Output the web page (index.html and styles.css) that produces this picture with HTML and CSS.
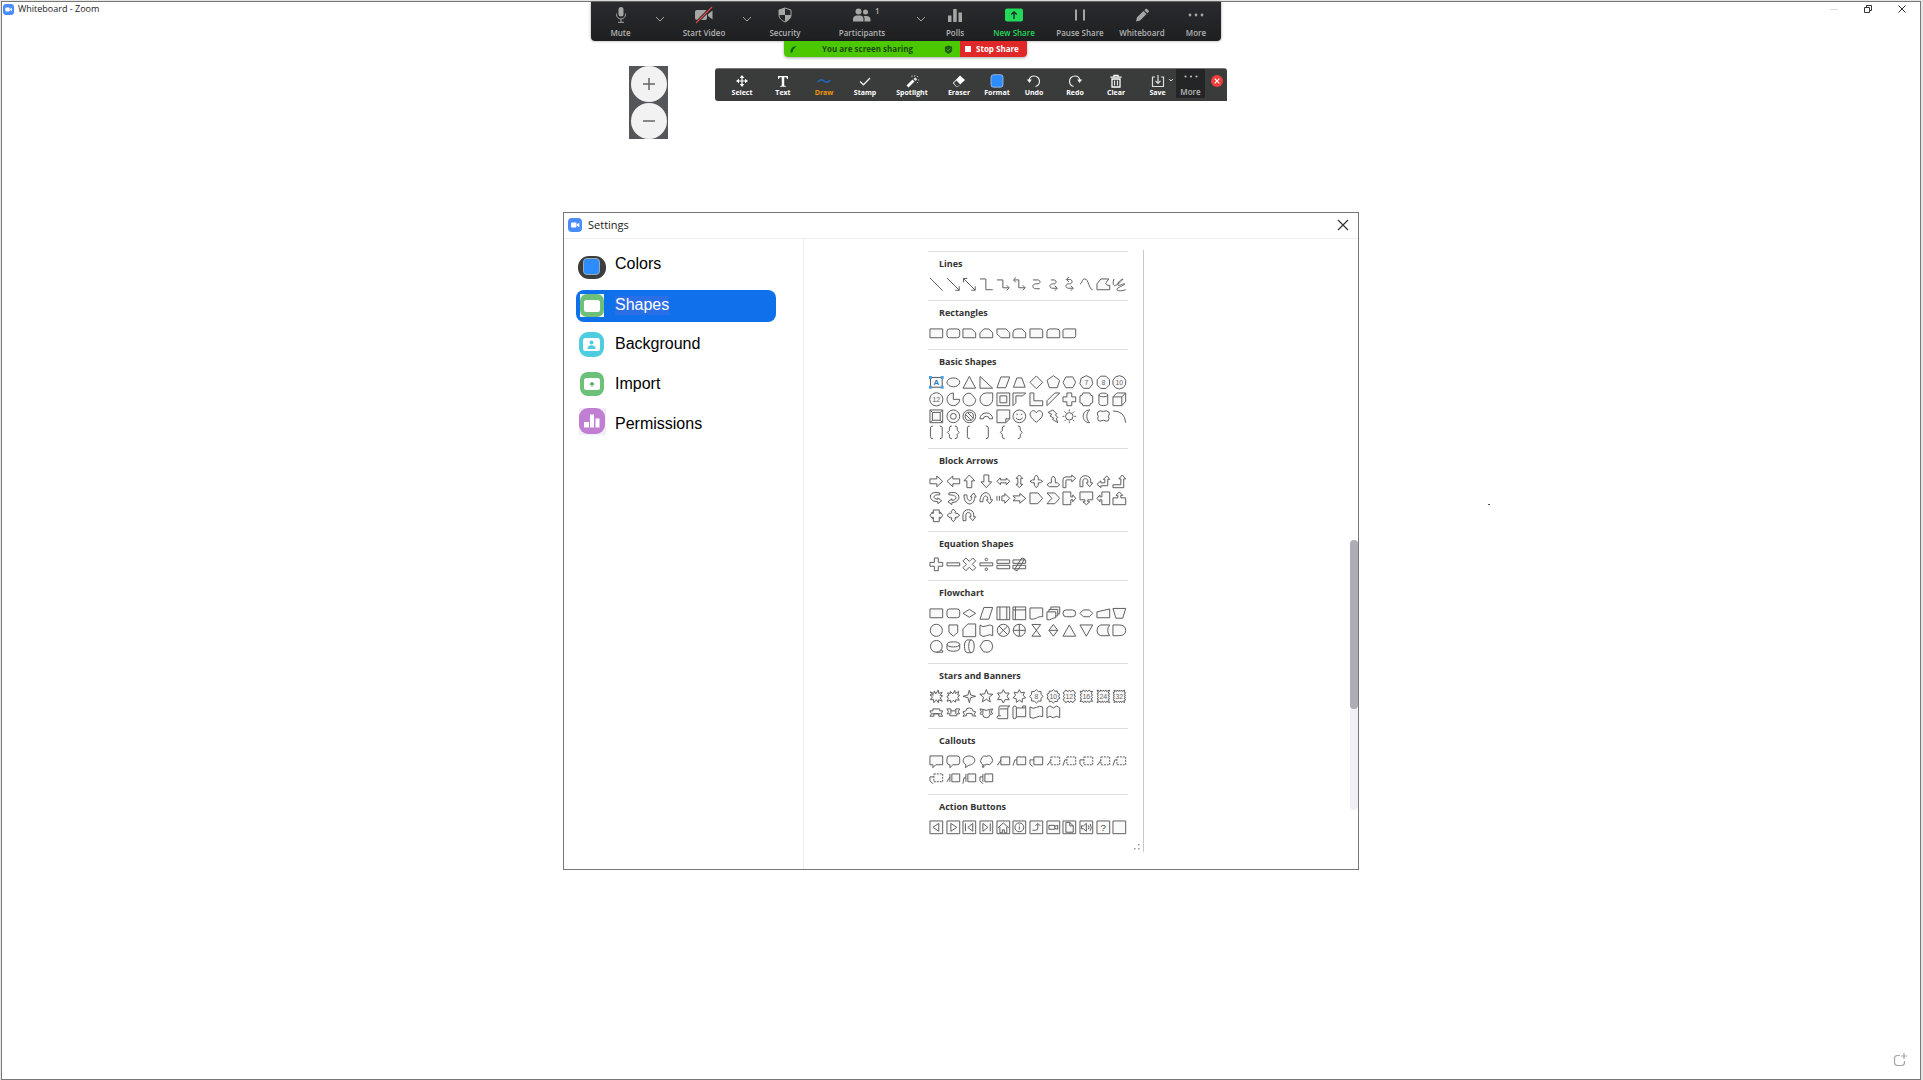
FILE: index.html
```html
<!DOCTYPE html>
<html lang="en">
<head>
<meta charset="utf-8">
<title>Whiteboard - Zoom</title>
<link rel="stylesheet" href="styles.css">
</head>
<body>
<main class="window">
  <header class="titlebar">
    <svg class="app-icon" viewBox="0 0 14 14"><rect width="14" height="14" rx="4" fill="#4a8cff"/><rect x="3" y="4.500" width="5.500" height="5" rx="1" fill="#fff"/><path d="M9 6.300l2.300-1.500v4.400L9 7.700z" fill="#fff"/></svg>
    <h1 class="window-title">Whiteboard - Zoom</h1>
    <div class="window-controls">
      <button aria-label="Minimize"><svg viewBox="0 0 10 10"><path d="M1 5.500h8" stroke="#ddd"/></svg></button>
      <button aria-label="Restore"><svg viewBox="0 0 10 10"><path d="M1.500 3.500h5v5h-5zM3.500 3V1.500h5v5H7" stroke="#333"/></svg></button>
      <button aria-label="Close"><svg viewBox="0 0 10 10"><path d="M1.500 1.500l7 7M8.500 1.500l-7 7" stroke="#333"/></svg></button>
    </div>
  </header>

  <nav class="meeting-bar" aria-label="Meeting controls">
    <button class="tool"><svg viewBox="0 0 20 18"><rect x="7.500" y="1" width="5" height="9.500" rx="2.500" fill="#a6a6a6"/><path d="M5.500 7.500v1a4.500 4.500 0 0 0 9 0v-1M10 13v3M7 16.300h6" stroke="#a6a6a6" fill="none"/></svg>Mute</button>
    <button class="caret" aria-label="Audio options"><svg viewBox="0 0 10 6"><path d="M1 1l4 4 4-4"/></svg></button>
    <button class="tool"><svg viewBox="0 0 20 18"><rect x="1" y="4" width="12" height="10" rx="2" fill="#a6a6a6"/><path d="M14 8l4.500-3.500v9L14 10z" fill="#a6a6a6"/><path d="M2 17L18 1" stroke="#222325" stroke-width="3"/><path d="M2 17L18 1" stroke="#e0484c" stroke-width="1.200"/></svg>Start Video</button>
    <button class="caret" aria-label="Video options"><svg viewBox="0 0 10 6"><path d="M1 1l4 4 4-4"/></svg></button>
    <button class="tool"><svg viewBox="0 0 20 18"><path d="M10 2l6 2v5c0 3-2.500 5.500-6 7-3.500-1.500-6-4-6-7V4z" stroke="#a6a6a6" fill="none"/><path d="M10 2v7H4V4zM10 9h6c0 3-2.500 5.500-6 7z" fill="#a6a6a6"/></svg>Security</button>
    <button class="tool"><svg viewBox="0 0 20 18"><circle cx="6.500" cy="5.500" r="3" fill="#a6a6a6"/><circle cx="13.500" cy="6" r="2.500" fill="#a6a6a6"/><path d="M1 15.500V13c0-2 2-3.500 4-3.500h3c2 0 3.500 1.500 3.500 3.500v2.500zM12.500 15.500v-3c0-1-.5-2-1-2.500h3c2.500 0 4 1.500 4 3.500v2z" fill="#a6a6a6"/></svg>Participants<span class="count">1</span></button>
    <button class="caret" aria-label="Participant options"><svg viewBox="0 0 10 6"><path d="M1 1l4 4 4-4"/></svg></button>
    <button class="tool"><svg viewBox="0 0 20 18"><path d="M3 9.500h3.500V16H3zM8.200 3h3.500v13H8.200zM13.500 6.500H17V16h-3.500z" fill="#a6a6a6"/></svg>Polls</button>
    <button class="tool new-share"><svg viewBox="0 0 20 18"><rect x="1" y="2.500" width="18" height="13" rx="2" fill="#23d959"/><path d="M10 13V6M7.300 8.500L10 5.800l2.700 2.700" stroke="#222325" stroke-width="1.300" fill="none"/></svg>New Share</button>
    <button class="tool"><svg viewBox="0 0 20 18"><path d="M6 3.500v11M14 3.500v11" stroke="#a6a6a6" stroke-width="2"/></svg>Pause Share</button>
    <button class="tool"><svg viewBox="0 0 20 18"><path d="M4 15.500l1-4.200L11.500 5l3 3-6.400 6.400zM12.300 4.200l1.300-1.300q.7-.6 1.400 0l1.600 1.600q.7.700 0 1.400L15.300 7.200z" fill="#a6a6a6"/></svg>Whiteboard</button>
    <button class="tool"><svg viewBox="0 0 20 18"><circle cx="4" cy="9" r="1.400" fill="#a6a6a6"/><circle cx="10" cy="9" r="1.400" fill="#a6a6a6"/><circle cx="16" cy="9" r="1.400" fill="#a6a6a6"/></svg>More</button>
  </nav>

  <div class="share-bar">
    <div class="share-status">
      <svg viewBox="0 0 10 10"><path d="M2 9C1 5 4 1 8.500 1.500 6 3 6.500 4 4.500 5 5 7 3.500 8 2 9z" fill="#0a5a14"/></svg>
      <span>You are screen sharing</span>
      <svg viewBox="0 0 10 10"><path d="M5 .5l4 1.500v3.500C9 7.500 7 9 5 9.800 3 9 1 7.500 1 5.500V2z" fill="#1d5c12"/><path d="M3 5l1.500 1.500L7.200 3.800" stroke="#4cc800" fill="none"/></svg>
    </div>
    <button class="stop-share">Stop Share</button>
  </div>

  <div class="zoom-control">
    <button aria-label="Zoom in"><svg viewBox="0 0 14 14"><path d="M7 1v12M1 7h12" stroke="#666" stroke-width="1.500"/></svg></button>
    <button aria-label="Zoom out"><svg viewBox="0 0 14 14"><path d="M1 7h12" stroke="#888" stroke-width="2"/></svg></button>
  </div>

  <nav class="draw-bar" aria-label="Annotation tools">
    <button class="tool"><svg viewBox="0 0 16 14"><path d="M8 1l2.300 3H5.700zM8 13l2.300-3H5.700zM2 7l3-2.300v4.600zM14 7l-3-2.300v4.600z" fill="#fff"/><path d="M8 3v8M4 7h8" stroke="#fff" stroke-width="1.200"/></svg>Select</button>
    <button class="tool"><svg viewBox="0 0 16 14"><path d="M3 2h10v3h-1l-.7-1.700H9.200V11.500l1.600.5v.8H5.200V12l1.600-.5V3.300H4.700L4 5H3z" fill="#fff"/></svg>Text</button>
    <button class="tool active"><svg viewBox="0 0 16 14"><path d="M2 8c2-3 4-2.500 6-1s4 2 6-1" stroke="#1d6cc8" stroke-width="1.500" fill="none"/></svg>Draw</button>
    <button class="tool"><svg viewBox="0 0 16 14"><path d="M3 7.500l3.500 3.300L13 4" stroke="#eee" stroke-width="1.300" fill="none"/></svg>Stamp</button>
    <button class="tool"><svg viewBox="0 0 16 14"><path d="M2.500 11.500l6-6 2 2-6 6z" fill="#fff"/><path d="M9.500 5l1.700-1.700 2 2L11.500 7z" fill="#ddd"/><path d="M8 3V1.500M10.500 2.500l.5-1.500M13 3l1-1M14 6h1.200M13 8l1 1" stroke="#ddd" stroke-width=".8"/></svg>Spotlight</button>
    <button class="tool"><svg viewBox="0 0 16 14"><path d="M9 1.500l5 4.500-7 6.500H5L1.800 9z" fill="#fff"/><path d="M5.300 6.500l4 4-2.300 1.500H5.300L2.800 9z" fill="#3a3b3b"/></svg>Eraser</button>
    <button class="tool"><svg viewBox="0 0 16 14"><rect x="2" y=".7" width="12" height="12.500" rx="2.500" fill="#2d8cff" stroke="#a9c4e6" stroke-width=".8"/></svg>Format</button>
    <button class="tool"><svg viewBox="0 0 16 14"><path d="M3 6.500C3.500 3.500 5.500 2 8 2c3 0 5.500 2.300 5.500 5.300 0 2.500-1.500 4.500-4 5.200" stroke="#eee" stroke-width="1.200" fill="none"/><path d="M.8 5.500h5L3.500 9z" fill="#eee"/></svg>Undo</button>
    <button class="tool"><svg viewBox="0 0 16 14"><path d="M13 6.500C12.500 3.500 10.500 2 8 2 5 2 2.500 4.300 2.500 7.300c0 2.500 1.500 4.500 4 5.200" stroke="#eee" stroke-width="1.200" fill="none"/><path d="M15.200 5.500h-5L12.500 9z" fill="#eee"/></svg>Redo</button>
    <button class="tool"><svg viewBox="0 0 16 14"><path d="M2.500 3.200h11M6 3V1.300h4V3M4 5v8h8V5z" stroke="#fff" stroke-width="1.300" fill="none"/><path d="M6.600 6.500v5M9.400 6.500v5" stroke="#fff"/></svg>Clear</button>
    <button class="tool save"><svg viewBox="0 0 16 14"><path d="M5 3H2.500v9.500h11V3H11M8 1v8M5.500 6.800L8 9.300l2.500-2.500" stroke="#ddd" stroke-width="1.200" fill="none"/></svg>Save<svg class="save-caret" viewBox="0 0 6 4"><path d="M1 1l2 2 2-2" stroke="#ddd" fill="none"/></svg></button>
    <button class="tool more"><svg viewBox="0 0 16 14"><circle cx="2.500" cy="3.500" r="1.100" fill="#bbb"/><circle cx="8" cy="3.500" r="1.100" fill="#bbb"/><circle cx="13.500" cy="3.500" r="1.100" fill="#bbb"/></svg>More</button>
    <button class="close-tools" aria-label="Close annotation tools"><svg viewBox="0 0 12 12"><circle cx="6" cy="6" r="6" fill="#f23d3d"/><path d="M3.700 3.700l4.600 4.600M8.300 3.700L3.700 8.300" stroke="#fff" stroke-width="1.200"/></svg></button>
  </nav>

  <section class="settings" aria-labelledby="settings-title">
    <header class="settings-header">
      <svg class="app-icon large" viewBox="0 0 14 14"><rect width="14" height="14" rx="4" fill="#4a8cff"/><rect x="3" y="4.500" width="5.500" height="5" rx="1" fill="#fff"/><path d="M9 6.300l2.300-1.500v4.400L9 7.700z" fill="#fff"/></svg>
      <h2 id="settings-title">Settings</h2>
      <button class="settings-close" aria-label="Close settings"><svg viewBox="0 0 12 12"><path d="M1 1l10 10M11 1L1 11" stroke="#333" stroke-width="1.200"/></svg></button>
    </header>
    <div class="settings-body">
      <nav class="categories" aria-label="Settings categories">
        <a href="#colors"><svg viewBox="0 0 28 32"><rect y="6" width="28" height="23" rx="11" fill="#3c3d3d"/><rect x="5.500" y="8.500" width="16" height="16" rx="3.500" fill="#2d8cff" stroke="#9aa7b5"/></svg>Colors</a>
        <a href="#shapes" class="selected" aria-current="page"><svg viewBox="0 0 28 32"><rect x="2" y="4" width="24" height="23" fill="#f1f6f3"/><rect x="2" y="4" width="24" height="23" rx="7" fill="#6cc07a"/><rect x="6" y="10" width="16" height="12" rx="2.500" fill="#fff"/></svg><span>Shapes</span></a>
        <a href="#background"><svg viewBox="0 0 28 32"><rect x="1" y="2" width="25" height="25" rx="9" fill="#4fcde0"/><rect x="5" y="8" width="17" height="13" rx="2.500" fill="#fff"/><circle cx="13.500" cy="12.500" r="2" fill="#4fcde0"/><path d="M9.500 19c0-3 2-3.700 4-3.700s4 .7 4 3.700z" fill="#4fcde0"/></svg>Background</a>
        <a href="#import"><svg viewBox="0 0 28 32"><rect x="2" y="2" width="24" height="24" rx="8" fill="#6cc07a"/><rect x="6" y="8" width="16" height="12" rx="2.500" fill="#fff"/><path d="M14 17V12.500M12 14.300l2-2 2 2z" stroke="#57ab66" fill="#57ab66"/></svg>Import</a>
        <a href="#permissions"><svg viewBox="0 0 28 32"><path d="M1-2h27v27H1z" fill="#f0eef6"/><rect x="1" y="-2" width="26" height="26" rx="9" fill="#c07fd3"/><path d="M6 12h5v5.500H6zM12 4.500h4v13h-4zM17.500 8.500h4v9h-4z" fill="#fff"/></svg>Permissions</a>
      </nav>
      <div class="content">
        <div class="palette" id="palette">
          <svg class="grip" viewBox="0 0 6 6"><path d="M4 0h1.500v1.500H4zM0 4h1.500v1.500H0zM4 4h1.500v1.500H4z" fill="#999"/></svg>
        </div>
        <div class="scroll-track"><div class="scroll-thumb"></div></div>
      </div>
    </div>
  </section>

  <div class="ink-dot"></div>
  <button class="add-page" aria-label="Add page"><svg viewBox="0 0 14 14"><path d="M7 2.500H4.500q-3 0-3 3v4q0 3 3 3h4q3 0 3-3V8M11 0v6M8 3h6" stroke="#a5a5ad" stroke-width="1.200" fill="none"/></svg></button>
</main>
<script src="palette.js"></script>
</body>
</html>
```

FILE: palette.js
```javascript
// Every shape is drawn in a 17 x 17 box. An entry is [path, extra markup].
const C = 8.5;

function ring(count, radius, turn = 0) {
  const list = [];
  for (let i = 0; i < count; i++) {
    const a = 2 * Math.PI * (i + turn) / count - Math.PI / 2;
    const r = radius(i, a);
    list.push((C + r * Math.cos(a)).toFixed(1) + " " + (C + r * Math.sin(a)).toFixed(1));
  }
  return "M" + list.join("L") + "Z";
}

const polygon = (sides, r, turn) => ring(sides, () => r, turn);
const star = (points, outer, inner) => ring(points * 2, (i) => i % 2 ? inner : outer);

// A seal: a star whose points follow the outline of a square.
const seal = (points, outer, inner) => ring(points * 2, (i, a) =>
  (i % 2 ? inner : outer) / Math.max(Math.abs(Math.cos(a)), Math.abs(Math.sin(a))));

function circle(r, x = C, y = C) {
  return `M${x - r} ${y}a${r} ${r} 0 1 0 ${2 * r} 0a${r} ${r} 0 1 0 ${-2 * r} 0z`;
}

const num = (n) => `<text x="8.5" y="11" text-anchor="middle">${n}</text>`;
const RECT = "M2 4h13v9H2z";
const BOX = "M2 2h13v13H2z";
const open = (d) => ["", `<path class="open" d="${d}"/>`];
const dashed = (line, box) => ["", `<path class="open" d="${line}"/><path class="dashed" d="${box}"/>`];

const sections = {
  "Lines": [
    open("M2 2L15 15"),
    open("M2 2L14.5 14.5M14.5 10.5v4h-4"),
    open("M2.5 2.5L14.5 14.5M14.5 10.5v4h-4M2.500 6.500v-4h4"),
    open("M2 3h6v11h7"),
    open("M2 4h6v8h6M12 9.500l2.500 2.500-2.500 2.500"),
    open("M3 4h5v8h6M12 9.500l2.500 2.500-2.500 2.500M5 1.500L2.500 4 5 6.500"),
    open("M5 4h5c3 0 3 4 0 4H8c-4 0-4 5 0 5h4"),
    open("M6 4h3c3 0 3 4 0 4H8c-4 0-4 4.500 0 4.500h4M10 10l2.500 2.500L10 15"),
    open("M6 3.500h3c3 0 3 4.500 0 4.500H8c-4 0-4 4.500 0 4.500h4M10 10l2.500 2.500L10 15M8 1L5.500 3.500 8 6"),
    open("M2 8C5 8 3 3 7 3s4 11 8 11"),
    ["M2 14V8l4-5h8l-2 3c-2 1-1 4 3 3.500V14z"],
    open("M3 3c-2 6 0 8 3 6s7-6 6-6-6 4-5 6 6-2 7-1-9 4-8 6 6 1 9 0")
  ],
  "Rectangles": [
    [RECT],
    ["M4.500 4h8q2.500 0 2.500 2.500v4q0 2.500-2.500 2.500h-8Q2 13 2 10.500v-4Q2 4 4.500 4z"],
    ["M2 4h9l4 4v5H2z"],
    ["M2 8l4-4h5l4 4v5H2z"],
    ["M2 4h9l4 4v5H6L2 9z"],
    ["M2 13V8q0-4 4-4h5l4 4v5z"],
    ["M2 4h11q2 0 2 2v7H2z"],
    ["M2 13V7q0-3 3-3h7q3 0 3 3v6z"],
    ["M4 4h11v7q0 2-2 2H2V6q0-2 2-2z"]
  ],
  "Basic Shapes": [
    ["", '<path class="picked" d="M2.500 3.500h12v10h-12z"/><path class="handles" d="M1 2h3v3H1zM13 2h3v3h-3zM1 12h3v3H1zM13 12h3v3h-3z"/><text class="letter" x="8.500" y="11.500" text-anchor="middle">A</text>'],
    ["M2 8.500a6.500 4.500 0 1 0 13 0a6.500 4.500 0 1 0-13 0z"],
    ["M8.500 2.500L15 14.500H2z"],
    ["M2 2.500L15 14.500H2z"],
    ["M6 3h9l-4 11H2z"],
    ["M6 4h5l3.500 9.500h-12z"],
    ["M8.500 2L15 8.500 8.500 15 2 8.500z"],
    [polygon(5, 6.8)],
    ["M5 3h7l3 5.500-3 5.500H5L2 8.500z"],
    [polygon(7, 6.8), num(7)],
    [polygon(8, 6.8, .5), num(8)],
    [polygon(10, 6.8), num(10)],
    [polygon(12, 6.8), num(12)],
    ["M8.500 2v6.500H15A6.500 6.500 0 1 1 8.500 2z"],
    ["M4 4Q8.500 0 12 4.500L15 8.500A6.500 6.500 0 1 1 4 4z"],
    ["M8.500 2H15v6.500A6.500 6.500 0 1 1 8.500 2z"],
    [BOX + "M5 5h7v7H5z"],
    ["M2 2h13l-3 3H5v7l-3 3z"],
    ["M2 2h4v8h9v5H2z"],
    ["M10 2h5L2 15v-5z"],
    ["M6 2h5v4h4v5h-4v4H6v-4H2V6h4z"],
    ["M5 2h7q0 3 3 3v7q-3 0-3 3H5q0-3-3-3V5q3 0 3-3z"],
    ["M4 4v9c0 2.500 9 2.500 9 0V4c0-2.500-9-2.500-9 0c0 2.500 9 2.500 9 0"],
    ["M2 6l4-4h9v8.500L11 15H2zM2 6h9v9M11 6l4-4"],
    [BOX + "M4.500 4.500h8v8h-8zM2 2l2.500 2.500M15 2l-2.500 2.500M2 15l2.500-2.500M15 15l-2.500-2.500"],
    [circle(6.5) + circle(3)],
    [circle(6.5) + circle(4.2) + "M4.500 6.500l6 6M6.500 4.500l6 6"],
    ["M2 11a6.500 6 0 0 1 13 0h-3.500a3 2.500 0 0 0-6 0z"],
    ["M2 2h13v9l-4 4H2zM11 15v-4h4"],
    [circle(6.5) + "M5 10q3.500 4 7 0M5.500 6.500h1.500M10 6.500h1.500"],
    ["M8.500 14.500C2 9.500 1 6.500 3 4s4.500-1 5.500 1C9.500 3 12 1.500 14 4s1 5.500-5.500 10.500z"],
    ["M8 2l4 4-1.500 1 2.500 2.500-1.500 1L13 15 7.500 11.500 9 10.500 5 8l2-1.500L3 4.500z"],
    [circle(3.8) + "M8.500 1.500v2M8.500 13.500v2M1.500 8.500h2M13.500 8.500h2M3.500 3.500L5 5M12 12l1.500 1.500M3.500 13.500L5 12M12 5l1.500-1.500"],
    ["M12 2C3 2 3 15 12 15 8 12 8 5 12 2z"],
    ["M3 4q2-2 5.500-.5Q12 2 14 4q1.500 2-.3 4.500Q15 11 13.500 13q-2 1-5-.5Q5 14 3.500 13 2 11 3.300 8.500 1.500 6 3 4z"],
    open("M2 3q12 0 13 12"),
    open("M5 2Q2.500 2 2.500 4v9q0 2 2.500 2M12 2q2.500 0 2.500 2v9q0 2-2.500 2"),
    open("M7 2Q4.500 2 4.500 4v2.500L2.500 8.500l2 2V13q0 2 2.500 2M10 2q2.500 0 2.500 2v2.500l2 2-2 2V13q0 2-2.500 2"),
    open("M9 2Q6.500 2 6.500 4v9q0 2 2.500 2"),
    open("M8 2q2.500 0 2.500 2v9q0 2-2.500 2"),
    open("M10 2Q7.500 2 7.500 4v2.500L5.500 8.500l2 2V13q0 2 2.500 2"),
    open("M7 2q2.500 0 2.500 2v2.500l2 2-2 2V13q0 2-2.500 2")
  ],
  "Block Arrows": [
    ["M2 6h7V3l6 5.500L9 14v-3H2z"],
    ["M15 6H8V3L2 8.500 8 14v-3h7z"],
    ["M6 15V8H3l5.500-6L14 8h-3v7z"],
    ["M6 2v7H3l5.500 6L14 9h-3V2z"],
    ["M2 8.500L5.500 5v2h6V5L15 8.500 11.500 12v-2h-6v2z"],
    ["M8.500 2L12 5.500h-2v6h2L8.500 15 5 11.500h2v-6H5z"],
    ["M8.500 2l2 2.500v2.500h2l2.500 1.500-2.500 1.500h-2v2.500l-2 2.500-2-2.500V10h-2L2 8.500 4.500 7h2V4.500z"],
    ["M8.500 3l2 2.500V10h2l2.500 2-2.500 2h-8L2 12l2.500-2h2V5.500z"],
    ["M2 15V7q0-3 3-3h6V2l4 3.500L11 9V7H6Q5 7 5 8v7z"],
    ["M2 14V8c0-7 11-7 11 0v2h2l-3 4-3.500-4H10V8c0-3-5-3-5 0v6z"],
    ["M12 3l3 3.500h-2V13H6v2l-4-3.500L6 8v2h4V6.500H8.500z"],
    ["M11.500 2L15 6h-2v9H2v-3h8V6H8z"],
    ["M12 3C4 1 1 5 3 9q1.500 3 7 3v2l4-3-4-3v1.500C4 9 5 4 12 5z"],
    ["M4 3c8-2 11 2 10 6q-1.500 4-7 4v2l-4-3 4-3v1.500c6 0 6-6-3-5.500z"],
    ["M3 5c0 12 11 12 11 2h1.500L13 3l-3.500 4H11c0 6-5 5-5-2z"],
    ["M2 12C2 0 13 0 13 10h2l-3 4-3.500-4H10c0-6-5-5-5 2z"],
    ["M7 6h3V3.500l5 5-5 5V11H7zM2 6v5M4.500 6v5"],
    ["M2 6h7V3.500l6 5-6 5V11H2l2.500-2.500z"],
    ["M2 3h8l5 5.500-5 5.500H2z"],
    ["M2 3h8l5 5.500-5 5.500H2l5-5.500z"],
    ["M2 2h8v5h2V5l3 3.500L12 12v-2h-2v5H2z"],
    ["M2 2h13v8h-5v2h2l-3.500 3L5 12h2v-2H2z"],
    ["M15 2H7v5H5V5L2 8.500 5 12v-2h2v5h8z"],
    ["M2 15V8h5V5.500H5L8.500 2 12 5.500h-2V8h5v7z"],
    ["M5.500 3h6v3.500h1V5L15 8.500 12.500 12v-1.500h-1V15h-6v-4.500h-1V12L2 8.500 4.500 5v1.500h1z"],
    ["M8.500 2l2.500 3-1 .5 1.500 1.500.5-1 3 2.500-3 2.500-.5-1-1.500 1.500 1 .5-2.500 3-2.500-3 1-.5L5.500 10l-.5 1-3-2.500L5 6l.5 1L7 5.500 6 5z"],
    ["M2 14V8c0-7 11-7 11 0v2h2l-3 4-3.500-4H10V8c0-3-5-3-5 0v6z"]
  ],
  "Equation Shapes": [
    ["M6.500 2h4v4.500H15v4h-4.500V15h-4v-4.500H2v-4h4.500z"],
    ["M2 7h13v3H2z"],
    ["M5 2l3.500 3.500L12 2l3 3-3.500 3.500L15 12l-3 3-3.500-3.500L5 15l-3-3 3.500-3.500L2 5z"],
    ["M2 7h13v3H2z" + circle(1.3, 8.5, 3.5) + circle(1.3, 8.5, 13.5)],
    ["M2 4h13v3.500H2zM2 9.500h13V13H2z"],
    ["M2 4h13v3.500H2zM2 9.500h13V13H2zM11 2l3 1-7.500 12-3-1z"]
  ],
  "Flowchart": [
    [RECT],
    ["M4.500 4h8q2.500 0 2.500 2.500v4q0 2.500-2.500 2.500h-8Q2 13 2 10.500v-4Q2 4 4.500 4z"],
    ["M8.500 4.500L15 8.500l-6.500 4L2 8.500z"],
    ["M6 2.500h9l-4 12H2z"],
    [BOX + "M5 2v13M12 2v13"],
    [BOX + "M4.500 2v13M2 5h13"],
    ["M2 3h13v9c-6-1-7 4-13 2z"],
    ["M2 7h9v6c-4 0-5 3-9 2zM4 7V4.500h9V11l-2 .3M6 4.500V2h9v7l-2 .3"],
    ["M5.500 5h6q3.500 0 3.500 3.500T11.500 12h-6Q2 12 2 8.500T5.500 5z"],
    ["M5.500 5h6L15 8.500 11.500 12h-6L2 8.500z"],
    ["M2 7l13-3v9H2z"],
    ["M2 3.500h13l-3 10H5z"],
    [circle(6.2)],
    ["M4 3h9v7.500L8.500 14.500 4 10.500z"],
    ["M2 7l5-5h8v13H2z"],
    ["M2 3q3 3 6.500 1T15 4v10q-3-2-6.500 0T2 13z"],
    [circle(6.2) + "M4 4l9 9M13 4l-9 9"],
    [circle(6.2) + "M8.500 2.300v12.400M2.300 8.500h12.400"],
    ["M4 2.500h9l-9 12h9z"],
    ["M8.500 2.500L13 8.500l-4.500 6L4 8.500zM4 8.500h9"],
    ["M8.500 3L15 14.500H2z"],
    ["M2 3h13L8.500 14.500z"],
    ["M6 3h9q-4 5.500 0 11H6q-4-1-4-5.500T6 3z"],
    ["M2 3h6q7 0 7 5.500T8 14H2z"],
    [circle(6) + "M8.500 14.500H15V13l-2-1"],
    ["M2 6.500v4c0 4 13 4 13 0v-4c0-3.500-13-3.500-13 0c0 3.500 13 3.500 13 0"],
    ["M6.500 2h4c4 0 4 13 0 13h-4c-4 0-4-13 0-13zM10.500 2c-3.500 0-3.500 13 0 13"],
    ["M5.500 3q8.500-2.500 9.500 5.500-1 8-9.500 5.500L2 8.500z"]
  ],
  "Stars and Banners": [
    ["M8 6l2.500-4 .5 3.500 3.500-1L12.500 7.500l2.500.5-2.500 2 2 3.500-3.500-1.500-.5 3-2-3-2.500 3-.5-3.500-3 .5 2-3-2.500-2h3.500L2 4l4 1.500L6.500 3z"],
    ["M8 6l2-3.500.5 3 3.500-2-1 3.500 2 .5-2 2 1.500 3-3.500-.5-.5 2.500-2-2L6 15l-.5-2.500-3.500 1 1.500-3L2 8.500l2-1L2.500 5l3 .5v-2z"],
    [star(4, 6.5, 2)],
    [star(5, 7, 3)],
    [star(6, 6.8, 3.8)],
    [star(7, 6.8, 4)],
    [star(8, 6.8, 5.3), num(8)],
    [star(10, 6.8, 5.5), num(10)],
    [seal(12, 6.4, 4.8), num(12)],
    [seal(14, 6.4, 4.9), num(16)],
    [seal(16, 6.4, 5), num(24)],
    [seal(18, 6.4, 5), num(32)],
    ["M2 7h3V5h7v2h3l-1.500 3L15 12.500h-4V10H6v2.500H2L3.500 10zM4 10h9"],
    ["M2 5h4v2h5V5h4l-1.500 3L15 10h-3v2H5v-2H2l1.500-2zM6 7v3M11 7v3"],
    ["M2 8l3-1q0-3 3.500-3T12 7l3 1-1.500 2.500 1.500 2-3.500-.5v-2q-3-1-6 0v2L2 12.500l1.500-2z"],
    ["M2 5l3 .5q3.500 2 7 0L15 5l-1.500 3 1.500 2-3 1q0 3-3.500 3T5 11l-3-1 1.500-2zM5 6v4M12 6v4"],
    ["M5 2h10q-2 0-2 3v10H3q-2-1 0-3h1V4q0-2 1-2zM5 5h8M4 12h2"],
    ["M2 4q0-2 2-2 1.500 0 1.500 2H15v9H5.500q0 2-2 2T2 13zM5.500 4v9M12 4V2h3v2"],
    ["M2 3q3 2.500 6.500.5T15 3v10q-3-1.500-6.500.5T2 13.500z"],
    ["M2 4l3-2 3.500 2L12 2l3 2v10l-3-1.500L8.500 14 5 12.500 2 14z"]
  ],
  "Callouts": [
    ["M2 3h13v9H8l-3 3v-3H2z"],
    ["M4.500 3h8q2.500 0 2.500 2.500v4q0 2.500-2.500 2.500H8l-3 3v-3Q2 12 2 9.500v-4Q2 3 4.500 3z"],
    ["M5 12C0 9 2 3 8.500 3S17 11 8 12.500L4.500 15z"],
    ["M4 5q1-3 4.500-1.500Q13 1.500 14 5q2 2.500 0 5-2 3-5 1.500-4 2-5.500-1Q1 8 4 5zM4.500 13h1.500v1.500H4.500z"],
    ["M6 4h9v8H6z", '<path class="open" d="M2 12h1l3-5"/>'],
    ["M6 4h9v8H6z", '<path class="open" d="M2 13l2-6h2"/>'],
    ["M6 4h9v8H6z", '<path class="open" d="M6 7H2v4l3 3"/>'],
    dashed("M2 12h1l3-5", "M6 4h9v8H6z"),
    dashed("M2 13l2-6h2", "M6 4h9v8H6z"),
    dashed("M6 7H2v4l3 3", "M6 4h9v8H6z"),
    dashed("M2 12h1l3-5", "M6 4h9v8H6z"),
    dashed("M2 13l2-6h2", "M6 4h9v8H6z"),
    dashed("M6 7H2v4l3 3", "M6 4h9v8H6z"),
    ["M7 4h8v8H7z", '<path class="open" d="M5 4v8M2 12l3-5"/>'],
    ["M7 4h8v8H7z", '<path class="open" d="M5 4v8M2 14l1-6h2"/>'],
    ["M7 4h8v8H7z", '<path class="open" d="M5 4v8M5 7H2v4l3 3"/>']
  ],
  "Action Buttons": [
    [BOX + "M11 4.500v8l-6-4z"],
    [BOX + "M6 4.500v8l6-4z"],
    [BOX + "M12 4.500v8l-5-4zM4.500 4.500v8"],
    [BOX + "M5 4.500v8l5-4zM12.500 4.500v8"],
    [BOX + "M3 9l5.500-5L14 9M5 8v6h2.500v-3h2v3H12V8"],
    [BOX + circle(4.5) + "M8.500 7.500v3.500M8.500 5.500v1"],
    [BOX + "M4.500 11.500h3q2.500 0 2.500-2.500V5M7.500 7L10 4.500 12.500 7"],
    [BOX + "M4 6.500h6v4H4zM10 7.500l3-1v4l-3-1"],
    [BOX + "M5 3.500h4l3.500 3.500v6.500H5zM9 3.500V7h3.500"],
    [BOX + "M3.500 7h2L8.500 4.500v8L5.500 10h-2zM10.500 6.500q1.500 2 0 4M12.500 5q2 3.500 0 7"],
    [BOX, '<text class="mark" x="8.500" y="12" text-anchor="middle">?</text>'],
    [BOX]
  ]
};

const palette = document.getElementById("palette");
for (const [title, shapes] of Object.entries(sections)) {
  const section = document.createElement("section");
  section.className = "group";
  section.innerHTML = `<h3>${title}</h3><div class="shapes">` + shapes.map(([d, extra = ""], i) =>
    `<button aria-label="${title} ${i + 1}"><svg viewBox="0 0 17 17"><path d="${d}"/>${extra}</svg></button>`
  ).join("") + "</div>";
  palette.append(section);
}
```

FILE: styles.css
```css
* { box-sizing: border-box; }
body {
  margin: 0;
  min-height: 100vh;
  display: flex;
  background: #e6e6e6;
  font-family: "Open Sans", "Noto Sans", sans-serif;
  color: #222;
}
button {
  margin: 0;
  padding: 0;
  border: 0;
  background: none;
  font: inherit;
  color: inherit;
}
svg { display: block; flex: none; fill: none; overflow: visible; }
h1, h2, h3 { margin: 0; font-weight: 400; }

.window {
  position: relative;
  flex: 1;
  margin: 1px 2px 0 1px;
  border: 1px solid #777;
  background: #fff;
}
.titlebar { display: flex; align-items: center; height: 14px; padding-left: 1px; }
.app-icon { width: 11px; height: 11px; }
.app-icon.large { width: 14px; height: 14px; }
.window-title { margin-left: 4px; font-size: 9px; line-height: 14px; }
.window-controls { display: flex; gap: 24px; margin: 0 13px 0 auto; }
.window-controls svg { width: 10px; height: 10px; }

/* Meeting controls */
.meeting-bar {
  position: absolute;
  left: 589px;
  top: 0;
  display: grid;
  grid-template-columns: 59px 20px 68px 18px 58px 96px 22px 46px 72px 60px 64px 44px;
  width: 630px;
  height: 39px;
  border-radius: 0 0 4px 4px;
  background: linear-gradient(#2a2b2e, #1e1f21);
  box-shadow: 0 0 3px #0006;
  color: #b2b2b2;
  font-size: 8px;
  font-weight: 600;
  line-height: 10px;
}
.tool {
  position: relative;
  display: flex;
  flex-direction: column;
  align-items: center;
  white-space: nowrap;
}
.meeting-bar .tool { padding-top: 4px; gap: 4px; }
.meeting-bar .tool svg { width: 20px; height: 18px; }
.meeting-bar .new-share { color: #23d959; }
.caret { display: flex; justify-content: center; padding-top: 14px; }
.caret svg { width: 10px; height: 6px; stroke: #a6a6a6; }
.count { position: absolute; left: 61px; top: 4px; }

/* Share status */
.share-bar {
  position: absolute;
  left: 782px;
  top: 39px;
  display: flex;
  width: 243px;
  height: 16px;
  border-radius: 0 0 4px 4px;
  box-shadow: 0 1px 3px #0005;
  overflow: hidden;
  font-size: 8px;
  font-weight: 700;
  line-height: 16px;
}
.share-status {
  display: flex;
  flex: 1;
  align-items: center;
  padding: 0 7px 0 5px;
  background: #4cc800;
  color: #1d4a12;
}
.share-status span { margin: 0 auto 0 24px; }
.share-status svg { width: 9px; height: 9px; }
.stop-share {
  display: flex;
  align-items: center;
  gap: 5px;
  width: 67px;
  padding-left: 5px;
  background: #e02828;
  color: #fff;
}
.stop-share::before { content: ""; width: 6px; height: 6px; background: #fff; }

/* Canvas zoom */
.zoom-control {
  position: absolute;
  left: 627px;
  top: 64px;
  display: flex;
  flex-direction: column;
  align-items: center;
  gap: 1px;
  width: 39px;
  background: #54565a;
}
.zoom-control button {
  display: grid;
  place-items: center;
  width: 36px;
  height: 36px;
  border-radius: 50%;
  background: #f2f2f2;
}
.zoom-control svg { width: 14px; height: 14px; }

/* Annotation tools */
.draw-bar {
  position: absolute;
  left: 713px;
  top: 66px;
  display: grid;
  grid-template-columns: 54px 28px 54px 28px 66px 28px 48px 26px 56px 26px 47px 29px 22px;
  height: 33px;
  border-top: 1px solid #777;
  border-radius: 3px 3px 0 3px;
  background: #3a3b3b;
  color: #fff;
  font-size: 7px;
  font-weight: 700;
  line-height: 8px;
}
.draw-bar .tool { padding-top: 5px; gap: 1px; }
.draw-bar .tool svg { width: 16px; height: 14px; }
.draw-bar .active { color: #f5970a; }
.draw-bar .save { padding-left: 10px; }
.draw-bar .save .save-caret { position: absolute; right: 2px; top: 9px; width: 6px; height: 4px; }
.draw-bar .more { margin-bottom: 3px; background: #242526; color: #bbb; font-size: 8px; font-weight: 600; padding-top: 4px; }
.close-tools { display: grid; place-items: center; padding: 0 0 8px 2px; }
.close-tools svg { width: 12px; height: 12px; }

/* Settings */
.settings {
  position: absolute;
  left: 561px;
  top: 210px;
  display: flex;
  flex-direction: column;
  width: 796px;
  min-height: 658px;
  border: 1px solid #777;
  background: #fff;
}
.settings-header {
  display: flex;
  align-items: center;
  height: 26px;
  padding: 0 9px 2px 4px;
  border-bottom: 1px solid #eceef1;
}
.settings-header h2 { margin-left: 6px; font-size: 11px; line-height: 16px; }
.settings-close { margin-left: auto; }
.settings-close svg { width: 12px; height: 12px; }
.settings-body { display: flex; flex: 1; }
.categories {
  display: flex;
  flex-direction: column;
  gap: 8px;
  width: 240px;
  padding: 11px 27px 0 12px;
  border-right: 1px solid #eceef1;
  font-family: "Liberation Sans", sans-serif;
  font-size: 16px;
  line-height: 28px;
}
.categories a {
  display: flex;
  gap: 9px;
  height: 32px;
  padding-left: 2px;
  border-radius: 8px;
  color: #000;
  text-decoration: none;
}
.categories svg { width: 28px; height: 32px; }
.categories .selected { background: #0e71eb; color: #fff; }
.selected span { align-self: flex-start; height: 19px; margin-top: 6px; background: #2b6fe6; line-height: 18px; }

.content { display: flex; flex: 1; align-items: stretch; }
.palette {
  position: relative;
  display: flex;
  flex-direction: column;
  justify-content: space-between;
  width: 216px;
  margin: 11px auto 17px 124px;
  padding: 1px 15px 16px 0;
  border-right: 1px solid #c8c8c8;
}
.grip { position: absolute; right: 3px; bottom: 2px; width: 6px; height: 6px; }
.group { border-top: 1px solid #dedede; }
.group h3 {
  padding: 6px 0 6px 11px;
  font-size: 9px;
  font-weight: 700;
  line-height: 12px;
  color: #333;
}
.shapes { display: grid; grid-template-columns: repeat(12, 1fr); }
.shapes svg {
  width: 100%;
  stroke: #5c5c5c;
  font: 7px "Liberation Sans", sans-serif;
}
.shapes path { fill: #f9f9f9; }
.shapes .open { fill: none; }
.shapes .dashed { stroke-dasharray: 2 1; }
.shapes .picked { stroke: #555; }
.shapes .handles { fill: #4aa3dc; stroke: none; }
.shapes text { fill: #666; stroke: none; }
.shapes .letter { fill: #1e7fc4; font-size: 8px; font-weight: 700; }
.shapes .mark { fill: #444; font-size: 10px; }

.scroll-track { width: 8px; height: 270px; margin-top: 301px; border-radius: 4px; background: #f0eff5; }
.scroll-thumb { height: 169px; border-radius: 4px; background: #adadb6; }

.ink-dot { position: absolute; left: 1486px; top: 502px; width: 2px; height: 1px; background: #555; }
.add-page { position: absolute; right: 13px; bottom: 12px; }
.add-page svg { width: 14px; height: 14px; }
```
